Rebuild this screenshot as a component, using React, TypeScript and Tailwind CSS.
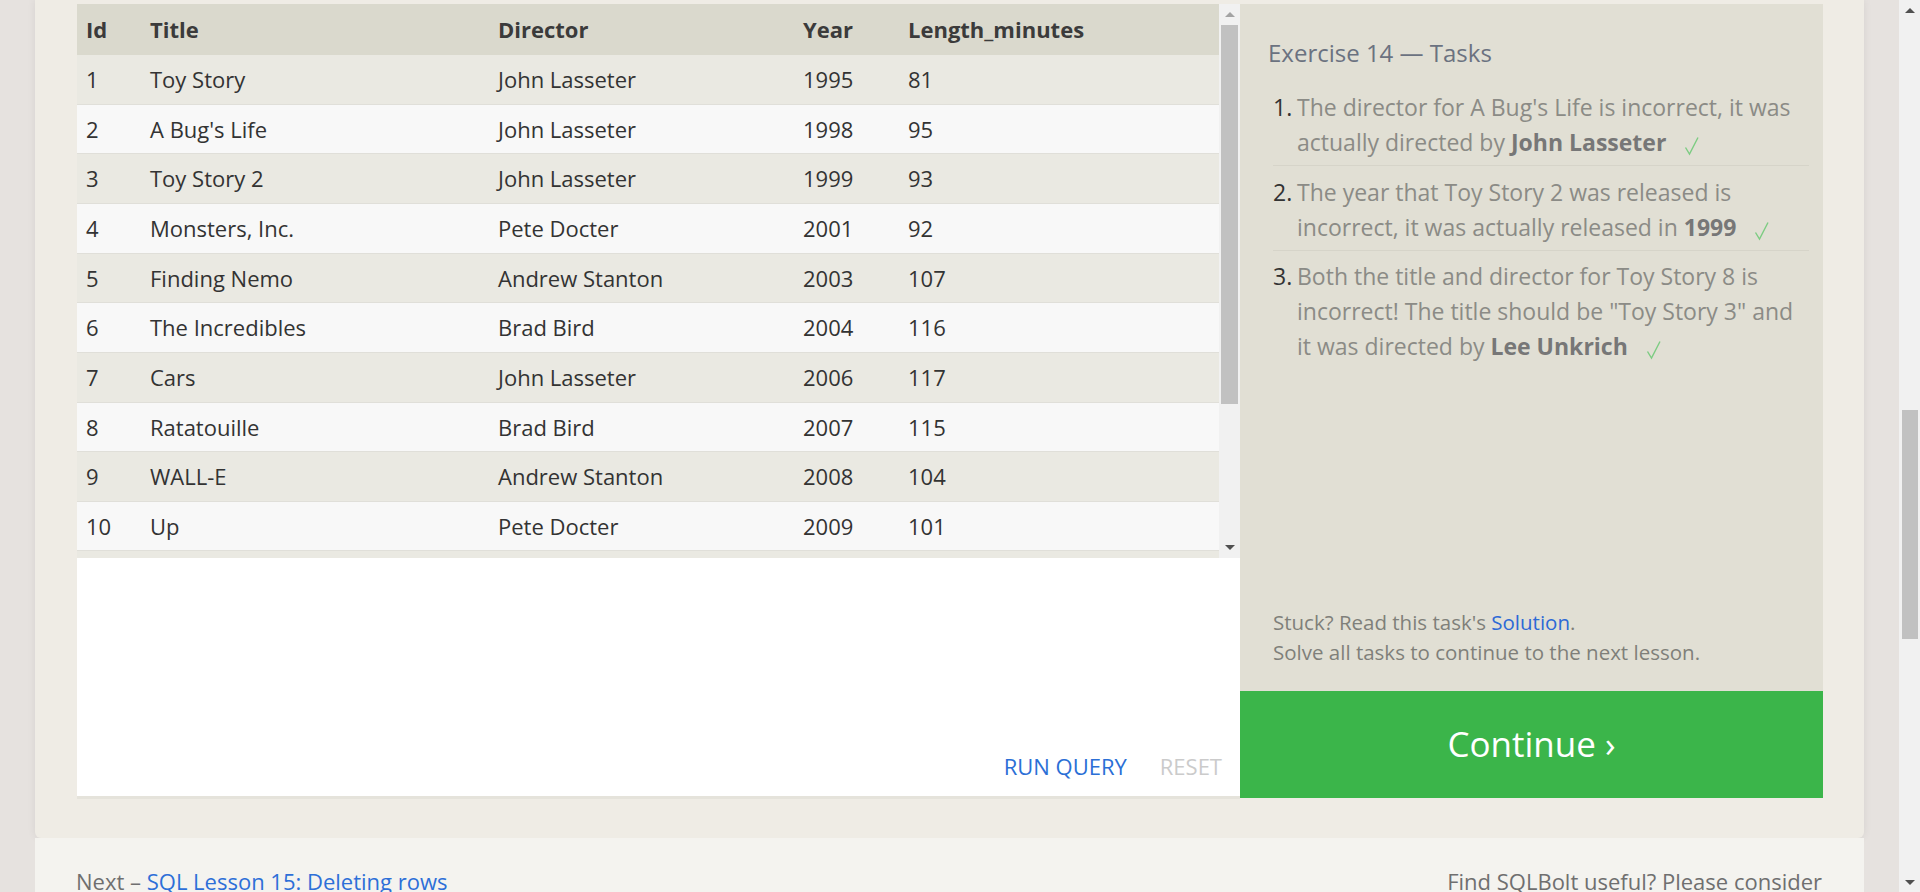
const font = { fontFamily: '"Open Sans", "Noto Sans", Arial, sans-serif' }

const movies: [number, string, string, number, number][] = [
  [1, 'Toy Story', 'John Lasseter', 1995, 81],
  [2, "A Bug's Life", 'John Lasseter', 1998, 95],
  [3, 'Toy Story 2', 'John Lasseter', 1999, 93],
  [4, 'Monsters, Inc.', 'Pete Docter', 2001, 92],
  [5, 'Finding Nemo', 'Andrew Stanton', 2003, 107],
  [6, 'The Incredibles', 'Brad Bird', 2004, 116],
  [7, 'Cars', 'John Lasseter', 2006, 117],
  [8, 'Ratatouille', 'Brad Bird', 2007, 115],
  [9, 'WALL-E', 'Andrew Stanton', 2008, 104],
  [10, 'Up', 'Pete Docter', 2009, 101],
]

const rowHeights = ['h-[50px]', 'h-[49px]', 'h-[50px]', 'h-[50px]', 'h-[49px]', 'h-[50px]', 'h-[50px]', 'h-[49px]', 'h-[50px]', 'h-[49px]']

const cols = 'grid grid-cols-[64px_348px_305px_105px_1fr]'

function Check() {
  return (
    <svg width="16" height="20" viewBox="0 0 16 20" className="inline-block ml-[18px] -mb-[2px]">
      <path d="M1.5 11.5 L5.5 18 L14 1.5" fill="none" stroke="#7ccc82" strokeWidth="1.4" />
    </svg>
  )
}

function Scrollbar() {
  return (
    <div className="w-[21px] h-full bg-[#f1f1f1] flex flex-col items-center">
      <div className="h-[21px] flex items-center justify-center">
        <div className="w-0 h-0 border-l-[5px] border-r-[5px] border-b-[5px] border-l-transparent border-r-transparent border-b-[#a3a3a3]" />
      </div>
      <div className="w-[17px] h-[379px] bg-[#c1c1c1]" />
      <div className="flex-1" />
      <div className="h-[21px] flex items-center justify-center">
        <div className="w-0 h-0 border-l-[5px] border-r-[5px] border-t-[5px] border-l-transparent border-r-transparent border-t-[#505050]" />
      </div>
    </div>
  )
}

function ResultTable() {
  return (
    <div className="w-[1142px] h-full overflow-hidden text-[22px] text-[#333]">
      <div className={`${cols} h-[51px] items-center bg-[#dad9cd] font-bold text-[#3b3b3b]`}>
        <div className="pl-[9px]">Id</div>
        <div className="pl-[9px]">Title</div>
        <div className="pl-[9px]">Director</div>
        <div className="pl-[9px]">Year</div>
        <div className="pl-[9px]">Length_minutes</div>
      </div>
      {movies.map((m, i) => (
        <div
          key={m[0]}
          className={`${cols} ${rowHeights[i]} items-center border-b border-[#e0dfd9] ${i % 2 === 0 ? 'bg-[#eae9e2]' : 'bg-[#f8f8f8]'}`}
        >
          <div className="pl-[9px]">{m[0]}</div>
          <div className="pl-[9px]">{m[1]}</div>
          <div className="pl-[9px]">{m[2]}</div>
          <div className="pl-[9px]">{m[3]}</div>
          <div className="pl-[9px]">{m[4]}</div>
        </div>
      ))}
      {/* top sliver of the next row, scrolled out of view */}
      <div className="h-[7px] bg-[#eae9e2]" />
    </div>
  )
}

function Tasks() {
  return (
    <ol className="pl-[33px] pr-[14px] text-[23px] leading-[35px] text-[#8b8b86]">
      <li className="flex pb-[5px] border-b border-[#d6d4c9]">
        <span className="w-[24px] shrink-0 text-[#333]">1.</span>
        <span className="whitespace-nowrap">
          The director for A Bug's Life is incorrect, it was
          <br />
          actually directed by <b className="text-[#777]">John Lasseter</b>
          <Check />
        </span>
      </li>
      <li className="flex mt-[9px] pb-[5px] border-b border-[#d6d4c9]">
        <span className="w-[24px] shrink-0 text-[#333]">2.</span>
        <span className="whitespace-nowrap">
          The year that Toy Story 2 was released is
          <br />
          incorrect, it was actually released in <b className="text-[#777]">1999</b>
          <Check />
        </span>
      </li>
      <li className="flex mt-[8px]">
        <span className="w-[24px] shrink-0 text-[#333]">3.</span>
        <span className="whitespace-nowrap">
          Both the title and director for Toy Story 8 is
          <br />
          incorrect! The title should be "Toy Story 3" and
          <br />
          it was directed by <b className="text-[#777]">Lee Unkrich</b>
          <Check />
        </span>
      </li>
    </ol>
  )
}

export default function App() {
  return (
    <div className="w-[1920px] h-[892px] overflow-hidden flex bg-[#e6e2df]" style={font}>
      <div className="flex-1 px-[35px] flex flex-col">
        {/* Exercise block */}
        <div className="bg-[#efece5] rounded-b-[6px] shadow-[0_0_8px_rgba(0,0,0,0.07)] pt-[4px] pb-[39px] pl-[42px] pr-[41px]">
          <div className="flex">
            <div className="w-[1163px] flex flex-col">
              <div className="h-[554px] flex">
                <ResultTable />
                <Scrollbar />
              </div>
              <div className="h-[238px] bg-white flex items-end justify-end gap-[33px] pr-[18px] pb-[13px] text-[22px]">
                <span className="text-[#2b6fd6]">RUN QUERY</span>
                <span className="text-[#cbcbcb]">RESET</span>
              </div>
              <div className="h-[3px] bg-[#e5e3db]" />
            </div>
            <div className="w-[583px] self-start flex flex-col">
              <div className="h-[687px] bg-[#e1dfd4] flex flex-col">
                <h3 className="pl-[28px] pt-[32px] pb-[20px] text-[24px] leading-[34px] text-[#6b7280]">
                  Exercise 14 — Tasks
                </h3>
                <Tasks />
                <div className="flex-1" />
                <div className="pl-[33px] pb-[24px] text-[20.5px] leading-[30px] text-[#7f7f7a]">
                  <div>
                    Stuck? Read this task's <span className="text-[#2d69d6]">Solution</span>.
                  </div>
                  <div>Solve all tasks to continue to the next lesson.</div>
                </div>
              </div>
              <div className="h-[107px] bg-[#3bb54a] flex items-center justify-center text-white text-[35px]">
                Continue ›
              </div>
            </div>
          </div>
        </div>

        {/* Footer */}
        <div className="flex-1 bg-[#f4f3ef] flex justify-between items-start pt-[27px] pl-[41px] pr-[42px] text-[22px] text-[#6f6f6f]">
          <div>
            Next – <span className="text-[#2d6fd8]">SQL Lesson 15: Deleting rows</span>
          </div>
          <div>Find SQLBolt useful? Please consider</div>
        </div>
      </div>

      {/* Window scrollbar */}
      <div className="w-[21px] bg-[#f1f1f1] flex flex-col items-center">
        <div className="h-[20px] flex items-center justify-center">
          <div className="w-0 h-0 border-l-[5px] border-r-[5px] border-b-[5px] border-l-transparent border-r-transparent border-b-[#505050]" />
        </div>
        <div className="mt-[390px] w-[16px] h-[229px] bg-[#c1c1c1]" />
        <div className="flex-1" />
        <div className="h-[20px] flex items-center justify-center">
          <div className="w-0 h-0 border-l-[5px] border-r-[5px] border-t-[5px] border-l-transparent border-r-transparent border-t-[#505050]" />
        </div>
      </div>
    </div>
  )
}
